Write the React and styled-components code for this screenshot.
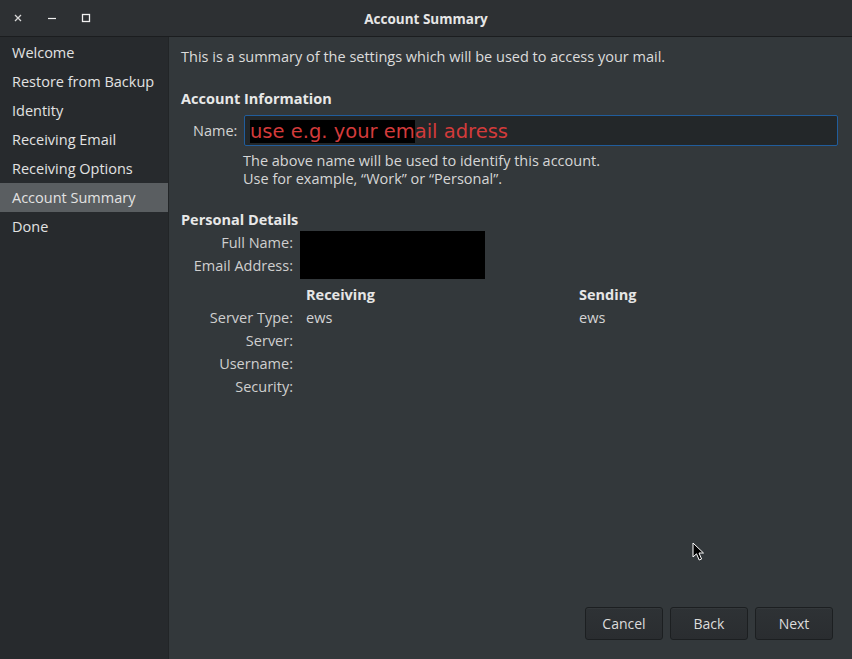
import styled, { createGlobalStyle } from "styled-components";

const sidebarItems = [
  "Welcome",
  "Restore from Backup",
  "Identity",
  "Receiving Email",
  "Receiving Options",
  "Account Summary",
  "Done",
];

const GlobalStyle = createGlobalStyle`
  html, body {
    margin: 0;
    padding: 0;
    background: #33383b;
  }
  * {
    box-sizing: border-box;
  }
`;

function App() {
  return (
    <>
      <GlobalStyle />
      <Window>
        <TitleBar>
          <WindowControls>
            <ControlButton aria-label="close">
              <svg width="8" height="8" viewBox="0 0 8 8">
                <path d="M1 1 L7 7 M7 1 L1 7" stroke="#d8d8d8" strokeWidth="1.3" />
              </svg>
            </ControlButton>
            <ControlButton aria-label="minimize">
              <svg width="10" height="10" viewBox="0 0 10 10">
                <path d="M1 5.5 H9" stroke="#f0f0f0" strokeWidth="1.2" />
              </svg>
            </ControlButton>
            <ControlButton aria-label="maximize">
              <svg width="10" height="10" viewBox="0 0 10 10">
                <rect x="1.5" y="1.5" width="7" height="7" fill="none" stroke="#f0f0f0" strokeWidth="1.3" />
              </svg>
            </ControlButton>
          </WindowControls>
          <Title>Account Summary</Title>
        </TitleBar>

        <Body>
          <Sidebar>
            {sidebarItems.map((item) => (
              <SidebarItem key={item} $active={item === "Account Summary"}>
                {item}
              </SidebarItem>
            ))}
          </Sidebar>

          <Main>
            <Intro>This is a summary of the settings which will be used to access your mail.</Intro>

            <SectionTitle $top={22}>Account Information</SectionTitle>
            <NameRow>
              <NameLabel>Name:</NameLabel>
              <NameInput>
                <Placeholder>
                  <Redacted>use e.g. your em</Redacted>ail adress
                </Placeholder>
              </NameInput>
            </NameRow>
            <Help>
              The above name will be used to identify this account.
              <br />
              Use for example, “Work” or “Personal”.
            </Help>

            <SectionTitle $top={22}>Personal Details</SectionTitle>
            <DetailsGrid>
              <Label>Full Name:</Label>
              <RedactBox />
              <Spacer />
              <Label>Email Address:</Label>
              <Spacer />

              <Label />
              <ColumnHead>Receiving</ColumnHead>
              <ColumnHead>Sending</ColumnHead>

              <Label>Server Type:</Label>
              <Value>ews</Value>
              <Value>ews</Value>

              <Label>Server:</Label>
              <Value />
              <Value />

              <Label>Username:</Label>
              <Value />
              <Value />

              <Label>Security:</Label>
              <Value />
              <Value />
            </DetailsGrid>

            <ButtonBar>
              <Button>Cancel</Button>
              <Button>Back</Button>
              <Button>Next</Button>
            </ButtonBar>

            <Pointer width="13" height="20" viewBox="0 0 13 20">
              <path
                d="M1 1 L1 15 L4.5 11.8 L7.2 18 L9.6 17 L7 11 L11.5 11 Z"
                fill="#000"
                stroke="#fff"
                strokeWidth="1"
                strokeLinejoin="round"
              />
            </Pointer>
          </Main>
        </Body>
      </Window>
    </>
  );
}

export default App;

const Window = styled.div`
  width: 852px;
  height: 659px;
  display: flex;
  flex-direction: column;
  font-family: "Open Sans", Lato, sans-serif;
  font-size: 14.5px;
  color: #dcdcdc;
  overflow: hidden;
`;

const TitleBar = styled.div`
  position: relative;
  height: 37px;
  flex-shrink: 0;
  display: flex;
  align-items: center;
  justify-content: center;
  padding-top: 2px;
  background: #2d3033;
  border-bottom: 1px solid #1b1d1f;
`;

const WindowControls = styled.div`
  position: absolute;
  left: 5px;
  top: 0;
  height: 36px;
  display: flex;
  align-items: center;
  gap: 8px;
`;

const ControlButton = styled.div`
  width: 26px;
  height: 26px;
  display: flex;
  align-items: center;
  justify-content: center;
`;

const Title = styled.div`
  font-weight: bold;
  color: #e6e6e6;
  font-size: 13.5px;
`;

const Body = styled.div`
  flex: 1;
  display: flex;
  min-height: 0;
`;

const Sidebar = styled.div`
  width: 169px;
  flex-shrink: 0;
  background: #272a2d;
  border-right: 1px solid #222527;
  padding-top: 1px;
  display: flex;
  flex-direction: column;
`;

const SidebarItem = styled.div`
  height: 29px;
  line-height: 30px;
  padding-left: 12px;
  white-space: nowrap;
  color: #e2e2e2;
  background: ${(p) => (p.$active ? "#5a5e61" : "transparent")};
`;

const Main = styled.div`
  position: relative;
  flex: 1;
  display: flex;
  flex-direction: column;
  padding: 10px 14px 19px 12px;
  background: #33383b;
`;

const Intro = styled.div`
  line-height: 20px;
`;

const SectionTitle = styled.div`
  margin-top: ${(p) => p.$top}px;
  line-height: 20px;
  font-weight: bold;
  color: #e8e8e8;
`;

const NameRow = styled.div`
  margin-top: 6px;
  display: flex;
  align-items: center;
  gap: 8px;
  padding-left: 12px;
`;

const NameLabel = styled.div`
  width: 43px;
  text-align: right;
  color: #d4d4d4;
`;

const NameInput = styled.div`
  flex: 1;
  height: 31px;
  display: flex;
  align-items: center;
  padding: 2px 0 0 5px;
  background: #232729;
  border: 1px solid #215d9c;
  border-radius: 2px;
`;

const Placeholder = styled.span`
  font-family: "DejaVu Sans", sans-serif;
  font-size: 19.5px;
  color: #d33b3b;
  line-height: 20px;
`;

const Redacted = styled.span`
  background: #000;
`;

const Help = styled.div`
  margin-top: 6px;
  padding-left: 62px;
  line-height: 18px;
  color: #d6d6d6;
`;

const DetailsGrid = styled.div`
  margin-top: 1px;
  display: grid;
  grid-template-columns: 112px 260px 1fr;
  grid-template-rows: 23px 23px 29px repeat(4, 23px);
  column-gap: 13px;
`;

const Label = styled.div`
  align-self: end;
  text-align: right;
  color: #cfcfcf;
  line-height: 23px;
`;

const Value = styled.div`
  align-self: end;
  color: #d4d4d4;
  line-height: 23px;
`;

const ColumnHead = styled.div`
  align-self: end;
  font-weight: bold;
  color: #e6e6e6;
  line-height: 23px;
`;

const Spacer = styled.div``;

const RedactBox = styled.div`
  grid-row: span 2;
  width: 185px;
  height: 48px;
  margin-left: -6px;
  background: #000;
`;

const ButtonBar = styled.div`
  margin-top: auto;
  display: flex;
  justify-content: flex-end;
  gap: 7px;
  padding-right: 5px;
`;

const Button = styled.button`
  width: 78px;
  height: 33px;
  font-family: inherit;
  font-size: 14px;
  color: #dcdcdc;
  background: linear-gradient(#2e3235, #2a2d30);
  border: 1px solid #1c1f21;
  border-radius: 3px;
  box-shadow: inset 0 1px 0 rgba(255, 255, 255, 0.03);
`;

const Pointer = styled.svg`
  position: absolute;
  left: 523px;
  top: 505px;
`;
